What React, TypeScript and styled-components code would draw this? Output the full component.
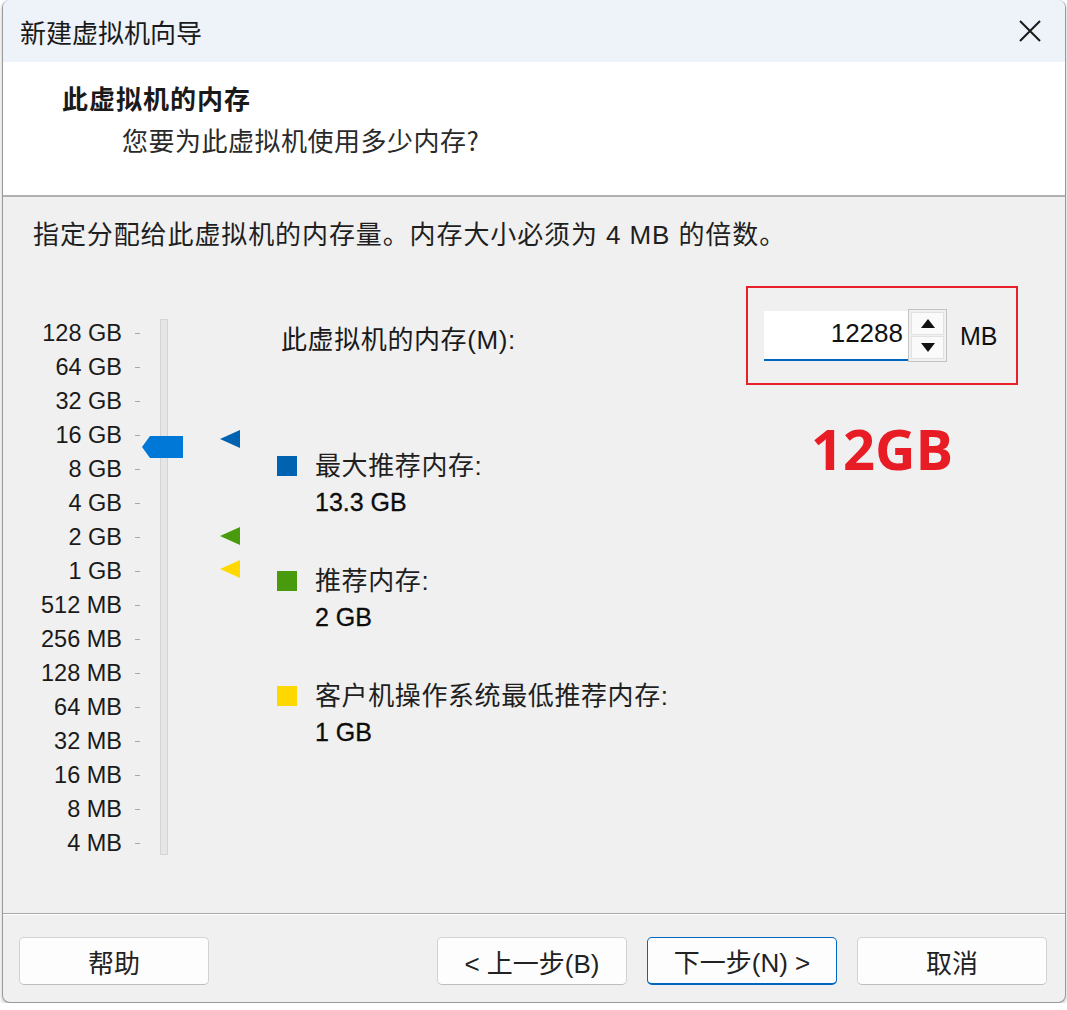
import React from 'react'
import styled, { createGlobalStyle } from 'styled-components'

const GlobalStyle = createGlobalStyle`
  html, body {
    margin: 0;
    padding: 0;
    background: #ffffff;
  }
  body {
    font-family: "Liberation Sans", "Noto Sans CJK SC", sans-serif;
    color: #1a1a1a;
  }
`

const Window = styled.div`
  margin-left: 2px;
  width: 1064px;
  height: 1003px;
  box-sizing: border-box;
  border: 1px solid #9a9a9a;
  border-top: none;
  border-radius: 8px;
  overflow: hidden;
  display: flex;
  flex-direction: column;
  background: #f0f0f0;
  box-shadow: 0 2px 4px rgba(0, 0, 0, 0.25);
`

const TitleBar = styled.div`
  height: 62px;
  flex-shrink: 0;
  background: #eef2f9;
  display: flex;
  align-items: center;
  justify-content: space-between;
  padding: 0 24px 0 17px;
`

const Title = styled.span`
  font-family: "Noto Sans CJK SC", sans-serif;
  font-size: 26px;
  color: #1a1a1a;
`

const Header = styled.div`
  height: 135px;
  flex-shrink: 0;
  background: #ffffff;
  box-sizing: border-box;
  padding: 18px 0 0 59px;
  border-bottom: 2px solid #b0b0b0;
`

const Heading = styled.div`
  font-family: "Noto Sans CJK SC", sans-serif;
  font-size: 26px;
  font-weight: 700;
  line-height: 36px;
  letter-spacing: 1px;
`

const SubHeading = styled.div`
  font-family: "Noto Sans CJK SC", sans-serif;
  font-size: 26px;
  line-height: 36px;
  margin: 6px 0 0 60px;
  color: #2a2a2a;
  letter-spacing: 0.5px;
`

const Body = styled.div`
  flex: 1;
  background: #f0f0f0;
  padding: 20px 47px 0 30px;
  border-bottom: 1px solid #a8a8a8;
`

const Intro = styled.div`
  font-size: 26px;
  line-height: 36px;
  letter-spacing: 0.9px;
  color: #1f1f1f;
`

const Main = styled.div`
  display: flex;
  align-items: flex-start;
  margin-top: 33px;
`

const ScaleArea = styled.div`
  position: relative;
  width: 244px;
  flex-shrink: 0;
  margin-top: 30px;
  display: flex;
  align-items: flex-start;
`

const LabelCol = styled.div`
  display: flex;
  flex-direction: column;
  width: 107px;
`

const ScaleRow = styled.div`
  height: 34px;
  display: flex;
  align-items: center;
  justify-content: flex-end;
  font-size: 23.5px;
  color: #1a1a1a;
`

const Tick = styled.span`
  display: block;
  width: 5px;
  height: 1px;
  background: #a8a8a8;
  margin-left: 13px;
`

const Track = styled.div`
  width: 8px;
  height: 536px;
  margin: 3px 0 0 20px;
  box-sizing: border-box;
  background: #e6e6e6;
  border: 1px solid #d4d4d4;
`

const MarkerCol = styled.div`
  position: relative;
  width: 20px;
  height: 540px;
  margin-left: 52px;
`

const Marker = styled.svg`
  position: absolute;
  left: 0;
`

const Thumb = styled.svg`
  position: absolute;
  left: 109px;
  top: 120px;
`

const RightArea = styled.div`
  flex: 1;
  display: flex;
  justify-content: space-between;
`

const InfoCol = styled.div`
  display: flex;
  flex-direction: column;
`

const FieldLabel = styled.div`
  height: 99px;
  display: flex;
  align-items: center;
  padding: 3px 0 0 4px;
  box-sizing: border-box;
  font-size: 26px;
  letter-spacing: 0.6px;
`

const Legend = styled.div`
  display: flex;
  flex-direction: column;
  gap: 43px;
  margin-top: 64px;
`

const LegendItem = styled.div`
  display: grid;
  grid-template-columns: 20px auto;
  column-gap: 18px;
  align-items: center;
`

const Swatch = styled.span<{ $color: string }>`
  display: block;
  width: 20px;
  height: 20px;
  background: ${p => p.$color};
`

const LegendLabel = styled.div`
  font-size: 26px;
  line-height: 34px;
  letter-spacing: 0.6px;
  color: #1f1f1f;
`

const LegendValue = styled.div`
  grid-column: 2;
  font-size: 25px;
  line-height: 38px;
  color: #0d0d0d;
  -webkit-text-stroke: 0.3px #0d0d0d;
`

const ValueCol = styled.div`
  display: flex;
  flex-direction: column;
  align-items: center;
  width: 272px;
`

const Highlight = styled.div`
  width: 272px;
  height: 99px;
  box-sizing: border-box;
  border: 2px solid #e8202a;
  display: flex;
  align-items: center;
  padding: 0 0 0 16px;
`

const NumberInput = styled.div`
  width: 144px;
  height: 50px;
  box-sizing: border-box;
  background: #ffffff;
  border-bottom: 2px solid #0067c0;
  display: flex;
  align-items: center;
  justify-content: flex-end;
  padding: 0 5px 2px 0;
  font-size: 26px;
  color: #111;
`

const Spinner = styled.div`
  width: 39px;
  height: 53px;
  box-sizing: border-box;
  border: 1px solid #c4c4c4;
  background: #f0f0f0;
  display: flex;
  flex-direction: column;
  padding: 2px;
  gap: 1px;
`

const SpinButton = styled.div`
  flex: 1;
  background: #fafafa;
  border: 1px solid #e2e2e2;
  display: flex;
  align-items: center;
  justify-content: center;
`

const Unit = styled.span`
  font-size: 25px;
  margin-left: 13px;
  padding-top: 2px;
  color: #111;
`

const BigValue = styled.div`
  font-family: "Open Sans", sans-serif;
  font-weight: 700;
  font-size: 56px;
  line-height: 60px;
  color: #e81c24;
  margin-top: 33px;
`

const Footer = styled.div`
  height: 88px;
  flex-shrink: 0;
  box-sizing: border-box;
  border-top: 1px solid #ffffff;
  display: flex;
  align-items: flex-start;
  padding: 22px 18px 0 16px;
`

const Spacer = styled.div`
  flex: 1;
`

const Button = styled.button<{ $primary?: boolean }>`
  width: 190px;
  height: 48px;
  margin-left: ${p => (p.$primary ? '20px' : '0')};
  margin-right: ${p => (p.$primary ? '20px' : '0')};
  box-sizing: border-box;
  background: #fdfdfd;
  border: 1px solid ${p => (p.$primary ? '#0067c0' : '#d2d2d2')};
  border-bottom: ${p => (p.$primary ? '2px solid #0067c0' : '1px solid #bdbdbd')};
  border-radius: 5px;
  font-family: "Liberation Sans", "Noto Sans CJK SC", sans-serif;
  font-size: 26px;
  color: #222;
  padding: 0;
  display: flex;
  align-items: center;
  justify-content: center;
`

const scale = ['128 GB', '64 GB', '32 GB', '16 GB', '8 GB', '4 GB', '2 GB', '1 GB', '512 MB', '256 MB', '128 MB', '64 MB', '32 MB', '16 MB', '8 MB', '4 MB']

const markers = [
  { top: 114, color: '#0063b1' },
  { top: 211, color: '#4a9a0e' },
  { top: 244, color: '#ffd800' },
]

const legend = [
  { color: '#0063b1', label: '最大推荐内存:', value: '13.3 GB' },
  { color: '#4a9a0e', label: '推荐内存:', value: '2 GB' },
  { color: '#ffd800', label: '客户机操作系统最低推荐内存:', value: '1 GB' },
]

const App = () => {
  return (
    <>
      <GlobalStyle />
      <Window>
        <TitleBar>
          <Title>新建虚拟机向导</Title>
          <svg width="22" height="22" viewBox="0 0 22 22">
            <path d="M1 1 L21 21 M21 1 L1 21" stroke="#1a1a1a" strokeWidth="2" fill="none" />
          </svg>
        </TitleBar>

        <Header>
          <Heading>此虚拟机的内存</Heading>
          <SubHeading>您要为此虚拟机使用多少内存?</SubHeading>
        </Header>

        <Body>
          <Intro>指定分配给此虚拟机的内存量。内存大小必须为 4 MB 的倍数。</Intro>

          <Main>
            <ScaleArea>
              <LabelCol>
                {scale.map(s => (
                  <ScaleRow key={s}>
                    {s}
                    <Tick />
                  </ScaleRow>
                ))}
              </LabelCol>
              <Track />
              <MarkerCol>
                {markers.map(m => (
                  <Marker key={m.color} width="20" height="18" viewBox="0 0 20 18" style={{ top: m.top }}>
                    <polygon points="0,9 20,0 20,18" fill={m.color} />
                  </Marker>
                ))}
              </MarkerCol>
              <Thumb width="41" height="22" viewBox="0 0 41 22">
                <polygon points="0,11 8,0 41,0 41,22 8,22" fill="#0078d7" />
              </Thumb>
            </ScaleArea>

            <RightArea>
              <InfoCol>
                <FieldLabel>此虚拟机的内存(M):</FieldLabel>
                <Legend>
                  {legend.map(l => (
                    <LegendItem key={l.label}>
                      <Swatch $color={l.color} />
                      <LegendLabel>{l.label}</LegendLabel>
                      <LegendValue>{l.value}</LegendValue>
                    </LegendItem>
                  ))}
                </Legend>
              </InfoCol>

              <ValueCol>
                <Highlight>
                  <NumberInput>12288</NumberInput>
                  <Spinner>
                    <SpinButton>
                      <svg width="14" height="9" viewBox="0 0 14 9">
                        <polygon points="7,0 14,9 0,9" fill="#111" />
                      </svg>
                    </SpinButton>
                    <SpinButton>
                      <svg width="14" height="9" viewBox="0 0 14 9">
                        <polygon points="0,0 14,0 7,9" fill="#111" />
                      </svg>
                    </SpinButton>
                  </Spinner>
                  <Unit>MB</Unit>
                </Highlight>
                <BigValue>12GB</BigValue>
              </ValueCol>
            </RightArea>
          </Main>
        </Body>

        <Footer>
          <Button>帮助</Button>
          <Spacer />
          <Button>&lt; 上一步(B)</Button>
          <Button $primary>下一步(N) &gt;</Button>
          <Button>取消</Button>
        </Footer>
      </Window>
    </>
  )
}

export default App
